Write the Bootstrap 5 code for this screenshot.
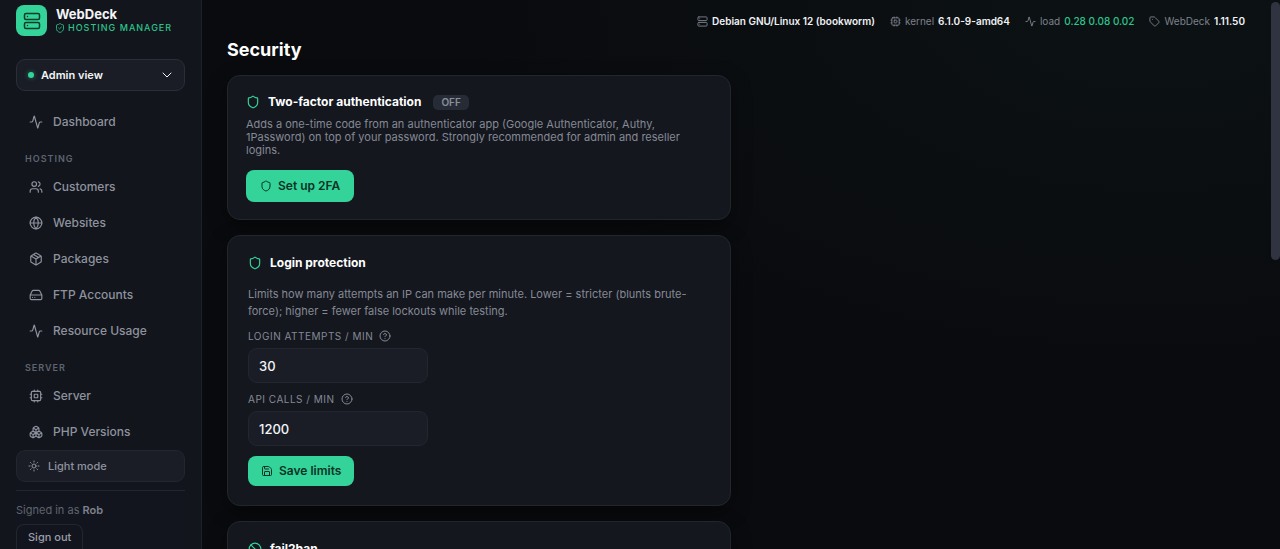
<!DOCTYPE html>
<html lang="en" data-bs-theme="dark">
<head>
<meta charset="utf-8">
<meta name="viewport" content="width=device-width, initial-scale=1">
<title>WebDeck – Security</title>
<link href="https://cdn.jsdelivr.net/npm/bootstrap@5.3.0/dist/css/bootstrap.min.css" rel="stylesheet">
<style>
  :root { --accent:#34d399; --panel:#14171e; --field:#1a1d26; --line:#22262f; --muted:#8e929e; --dim:#5f6470; }
  body { font-family: Inter, "Liberation Sans", sans-serif; font-size: 12px; line-height: 18px; color: #f3f4f6;
         background: radial-gradient(900px 500px at 90% 0, #0c1214, #0a0b0e 75%) #0a0b0e; }
  svg { fill: none; stroke: currentColor; stroke-width: 2; stroke-linecap: round; stroke-linejoin: round; flex: none; display: block; }
  .i10 { width: 8px; height: 10px; } .i12 { width: 12px; height: 12px; }
  .i18 { width: 18px; height: 18px; }
  .sidebar { width: 202px; background: #12151b; border-right: 1px solid #1e2229; padding: 5px 16px 0; }
  .logo { width: 31px; height: 31px; border-radius: 8px; background: var(--accent); color: #0b3b2a; }
  .brand-row { gap: 9px; }
  .brand-name { font-size: 13px; font-weight: 700; line-height: 15px; }
  .brand-sub { font-size: 9px; line-height: 12px; letter-spacing: 1px; font-weight: 500; color: #2cc48c; }
  .view-btn { height: 32px; margin-top: 23px; padding: 0 11px 0 11px; background: var(--field); border: 1px solid #2a2e38; border-radius: 9px; font-size: 11px; font-weight: 600; color: #f3f4f6; gap: 7px; }
  .dot { width: 6px; height: 6px; border-radius: 50%; background: var(--accent); box-shadow: 0 0 5px #34d39980; }
  .menu { padding-top: 13px; }
  .menu a { height: 36px; padding: 0 13px; color: var(--muted); font-weight: 500; text-decoration: none; gap: 10px; }
  .menu a svg { width: 14px; height: 14px; }
  .group-label { font-size: 9px; line-height: 12px; font-weight: 600; letter-spacing: 1px; color: var(--dim); margin: 13px 0 4px 9px; }
  .side-foot { background: #12151d; line-height: 16px; }
  .theme-btn { height: 32px; padding: 0 11px; background: var(--field); border: 1px solid var(--line); border-radius: 9px; color: var(--muted); font-size: 11px; font-weight: 500; gap: 8px; }
  .theme-btn svg { width: 12px; height: 12px; }
  .signed { border-top: 1px solid var(--line); margin-top: 8px; padding-top: 11px; font-size: 11px; color: var(--dim); }
  .signed strong { font-weight: 600; color: #7d818e; }
  .out-btn { height: 25px; margin-top: 6px; padding: 0 11px; border: 1px solid var(--line); border-bottom: 0; border-radius: 8px 8px 0 0; color: #9a9eaa; font-size: 11px; font-weight: 500; }
  .main-col { padding: 13px 35px 0 25px; }
  .status { font-size: 10px; line-height: 16px; color: #7d818c; gap: 15px; }
  .status b { font-weight: 600; color: #f0f1f4; } .status b.ok { color: #2cc48c; font-weight: 500; }
  .status svg { width: 11px; height: 11px; }
  h1 { font-size: 18px; line-height: 24px; font-weight: 700; margin: 9px 0 13px; }
  .panel { max-width: 504px; background: var(--panel); border: 1px solid var(--line); border-radius: 13px; box-shadow: 0 6px 20px #0006; margin-bottom: 15px; }
  .panel h2 { font-size: 12px; line-height: 18px; font-weight: 700; margin: 0; }
  .pill { font-size: 10px; line-height: 15px; font-weight: 600; padding: 0 8px; border-radius: 5px; background: #272b35; color: #8b8f9b; }
  .panel p { color: #858995; font-size: 11px; max-width: 442px; }
  .p-twofa { padding: 17px 18px; } .p-twofa p { line-height: 13px; margin: 7px 0 13px; }
  .p-login { padding: 18px 20px 19px; } .p-login p { line-height: 17px; margin: 14px 0 10px; }
  .icon-accent { color: var(--accent); width: 14px; height: 14px; }
  .go-btn { height: 32px; padding: 0 14px; border-radius: 8px; background: var(--accent); color: #0a3325; font-size: 12px; font-weight: 600; gap: 6px; }
  .go-btn.save { height: 30px; padding: 0 13px; }
  .go-btn:hover { background: #2cc48c; color: #0a3325; }
  .cap { font-size: 10px; line-height: 12px; letter-spacing: .05em; color: #858995; gap: 6px; }
  .num { width: 180px; height: 35px; margin: 6px 0 10px; padding: 0 10px; background: var(--field); border: 1px solid var(--line); border-radius: 9px; font-size: 13px; font-weight: 500; color: #f3f4f6; appearance: none; }
  .thumb { position: absolute; right: 0; top: 2px; width: 9px; height: 47%; border-radius: 5px; background: #2f3440; }
</style>
</head>
<body>
<svg class="d-none" aria-hidden="true">
  <symbol id="pulse" viewBox="0 0 24 24"><path d="M22 12h-2.48a2 2 0 0 0-1.93 1.46l-2.35 8.36a.25.25 0 0 1-.48 0L9.24 2.18a.25.25 0 0 0-.48 0l-2.35 8.36A2 2 0 0 1 4.49 12H2"/></symbol>
  <symbol id="server" viewBox="0 0 24 24"><rect x="2" y="2" width="20" height="8" rx="2"/><rect x="2" y="14" width="20" height="8" rx="2"/><path d="M6 6h.01M6 18h.01"/></symbol>
  <symbol id="shield" viewBox="0 0 24 24"><path d="M20 13c0 5-3.5 7.5-7.66 8.95a1 1 0 0 1-.67-.01C7.5 20.5 4 18 4 13V6a1 1 0 0 1 1-1c2 0 4.5-1.2 6.24-2.72a1.17 1.17 0 0 1 1.52 0C14.51 3.81 17 5 19 5a1 1 0 0 1 1 1z"/></symbol>
  <symbol id="cpu" viewBox="0 0 24 24"><rect x="4" y="4" width="16" height="16" rx="2"/><rect x="9" y="9" width="6" height="6" rx="1"/><path d="M15 2v2M15 20v2M2 15h2M2 9h2M20 15h2M20 9h2M9 2v2M9 20v2"/></symbol>
  <symbol id="help" viewBox="0 0 24 24"><circle cx="12" cy="12" r="10"/><path d="M9.09 9a3 3 0 0 1 5.83 1c0 2-3 3-3 3M12 17h.01"/></symbol>
</svg>
<div class="d-flex vh-100 overflow-hidden">
  <aside class="sidebar d-flex flex-column flex-shrink-0">
    <div class="brand-row d-flex align-items-center flex-shrink-0">
      <div class="logo d-flex align-items-center justify-content-center flex-shrink-0"><svg class="i18" viewBox="0 0 24 24"><use href="#server"/></svg></div>
      <div class="brand-text">
        <div class="brand-name">WebDeck</div>
        <div class="brand-sub d-flex align-items-center gap-1 text-nowrap"><svg class="i10" viewBox="3 1 18 22"><use href="#shield" width="24" height="24"/><path d="m9 12 2 2 4-4"/></svg>HOSTING MANAGER</div>
      </div>
    </div>
    <button class="btn view-btn d-flex align-items-center w-100 flex-shrink-0" type="button"><span class="dot"></span>Admin view<svg class="i12 ms-auto" viewBox="0 0 24 24"><path d="m4 8 8 8 8-8"/></svg></button>
    <nav class="menu d-flex flex-column flex-grow-1 overflow-hidden" aria-label="Main">
      <a href="#" class="d-flex align-items-center flex-shrink-0"><svg viewBox="0 0 24 24"><use href="#pulse"/></svg>Dashboard</a>
      <div class="group-label">HOSTING</div>
      <a href="#" class="d-flex align-items-center flex-shrink-0"><svg viewBox="0 0 24 24"><path d="M16 21v-2a4 4 0 0 0-4-4H6a4 4 0 0 0-4 4v2"/><circle cx="9" cy="7" r="4"/><path d="M22 21v-2a4 4 0 0 0-3-3.87M16 3.13a4 4 0 0 1 0 7.75"/></svg>Customers</a>
      <a href="#" class="d-flex align-items-center flex-shrink-0"><svg viewBox="0 0 24 24"><circle cx="12" cy="12" r="10"/><path d="M12 2a14.5 14.5 0 0 0 0 20 14.5 14.5 0 0 0 0-20M2 12h20"/></svg>Websites</a>
      <a href="#" class="d-flex align-items-center flex-shrink-0"><svg viewBox="0 0 24 24"><path d="M11 21.73a2 2 0 0 0 2 0l7-4A2 2 0 0 0 21 16V8a2 2 0 0 0-1-1.73l-7-4a2 2 0 0 0-2 0l-7 4A2 2 0 0 0 3 8v8a2 2 0 0 0 1 1.73zM12 22V12M3.3 7 12 12l8.7-5M7.5 4.27l9 5.15"/></svg>Packages</a>
      <a href="#" class="d-flex align-items-center flex-shrink-0"><svg viewBox="0 0 24 24"><path d="M22 12H2M5.45 5.11 2 12v6a2 2 0 0 0 2 2h16a2 2 0 0 0 2-2v-6l-3.45-6.89A2 2 0 0 0 16.76 4H7.24a2 2 0 0 0-1.79 1.11zM6 16h.01M10 16h.01"/></svg>FTP Accounts</a>
      <a href="#" class="d-flex align-items-center flex-shrink-0"><svg viewBox="0 0 24 24"><use href="#pulse"/></svg>Resource Usage</a>
      <div class="group-label">SERVER</div>
      <a href="#" class="d-flex align-items-center flex-shrink-0"><svg viewBox="0 0 24 24"><use href="#cpu"/></svg>Server</a>
      <a href="#" class="d-flex align-items-center flex-shrink-0"><svg viewBox="0 0 24 24"><path d="M2.97 12.92A2 2 0 0 0 2 14.63v3.24a2 2 0 0 0 .97 1.71l3 1.8a2 2 0 0 0 2.06 0L12 19v-5.5l-5-3zM7 16.5l-4.74-2.85M7 16.5l5-3M7 16.5v5.17M12 13.5V19l3.97 2.38a2 2 0 0 0 2.06 0l3-1.8a2 2 0 0 0 .97-1.71v-3.24a2 2 0 0 0-.97-1.71L17 10.5zM17 16.5l-5-3M17 16.5l4.74-2.85M17 16.5v5.17M7.97 4.42A2 2 0 0 0 7 6.13v4.37l5 3 5-3V6.13a2 2 0 0 0-.97-1.71l-3-1.8a2 2 0 0 0-2.06 0zM12 8 7.26 5.15M12 8l4.74-2.85M12 13.5V8"/></svg>PHP Versions</a>
    </nav>
    <div class="side-foot flex-shrink-0">
      <button class="btn theme-btn d-flex align-items-center w-100" type="button"><svg viewBox="0 0 24 24"><circle cx="12" cy="12" r="4"/><path d="M12 2v2M12 20v2M4.93 4.93l1.41 1.41M17.66 17.66l1.41 1.41M2 12h2M20 12h2M6.34 17.66l-1.41 1.41M19.07 4.93l-1.41 1.41"/></svg>Light mode</button>
      <div class="signed">Signed in as <strong>Rob</strong></div>
      <button class="btn out-btn" type="button">Sign out</button>
    </div>
  </aside>
  <main class="main-col flex-grow-1 overflow-hidden position-relative">
    <div class="status d-flex justify-content-end text-nowrap">
      <div class="d-flex align-items-center gap-1"><svg viewBox="0 0 24 24"><use href="#server"/></svg><b>Debian GNU/Linux 12 (bookworm)</b></div>
      <div class="d-flex align-items-center gap-1"><svg viewBox="0 0 24 24"><use href="#cpu"/></svg>kernel <b>6.1.0-9-amd64</b></div>
      <div class="d-flex align-items-center gap-1"><svg viewBox="0 0 24 24"><use href="#pulse"/></svg>load <b class="ok">0.28 0.08 0.02</b></div>
      <div class="d-flex align-items-center gap-1"><svg viewBox="0 0 24 24"><path d="M12.59 2.59A2 2 0 0 0 11.17 2H4a2 2 0 0 0-2 2v7.17a2 2 0 0 0 .59 1.42l8.7 8.7a2.43 2.43 0 0 0 3.42 0l6.58-6.58a2.43 2.43 0 0 0 0-3.42zM7.5 7.5h.01"/></svg>WebDeck <b>1.11.50</b></div>
    </div>
    <h1>Security</h1>
    <section class="panel p-twofa">
      <div class="d-flex align-items-center gap-2"><svg class="icon-accent" viewBox="0 0 24 24"><use href="#shield"/></svg><h2>Two-factor authentication</h2><span class="pill ms-1">OFF</span></div>
      <p>Adds a one-time code from an authenticator app (Google Authenticator, Authy, 1Password) on top of your password. Strongly recommended for admin and reseller logins.</p>
      <button class="btn go-btn d-inline-flex align-items-center border-0" type="button"><svg class="i12" viewBox="0 0 24 24"><use href="#shield"/></svg>Set up 2FA</button>
    </section>
    <section class="panel p-login">
      <div class="d-flex align-items-center gap-2"><svg class="icon-accent" viewBox="0 0 24 24"><use href="#shield"/></svg><h2>Login protection</h2></div>
      <p>Limits how many attempts an IP can make per minute. Lower = stricter (blunts brute-force); higher = fewer false lockouts while testing.</p>
      <label class="cap d-flex align-items-center" for="login">LOGIN ATTEMPTS / MIN <svg class="i12" viewBox="0 0 24 24"><use href="#help"/></svg></label>
      <input class="num d-block" id="login" type="text" inputmode="numeric" value="30">
      <label class="cap d-flex align-items-center" for="api">API CALLS / MIN <svg class="i12" viewBox="0 0 24 24"><use href="#help"/></svg></label>
      <input class="num d-block" id="api" type="text" inputmode="numeric" value="1200">
      <button class="btn go-btn save d-inline-flex align-items-center border-0" type="button"><svg class="i12" viewBox="0 0 24 24"><path d="M15.2 3a2 2 0 0 1 1.4.6l3.8 3.8a2 2 0 0 1 .6 1.4V19a2 2 0 0 1-2 2H5a2 2 0 0 1-2-2V5a2 2 0 0 1 2-2zM17 21v-7a1 1 0 0 0-1-1H8a1 1 0 0 0-1 1v7M7 3v4a1 1 0 0 0 1 1h7"/></svg>Save limits</button>
    </section>
    <section class="panel p-login">
      <div class="d-flex align-items-center gap-2"><svg class="icon-accent" viewBox="0 0 24 24"><circle cx="12" cy="12" r="10"/><path d="m4.9 4.9 14.2 14.2"/></svg><h2>fail2ban</h2></div>
    </section>
    <div class="thumb" aria-hidden="true"></div>
  </main>
</div>
<script src="https://cdn.jsdelivr.net/npm/bootstrap@5.3.0/dist/js/bootstrap.bundle.min.js"></script>
</body>
</html>
